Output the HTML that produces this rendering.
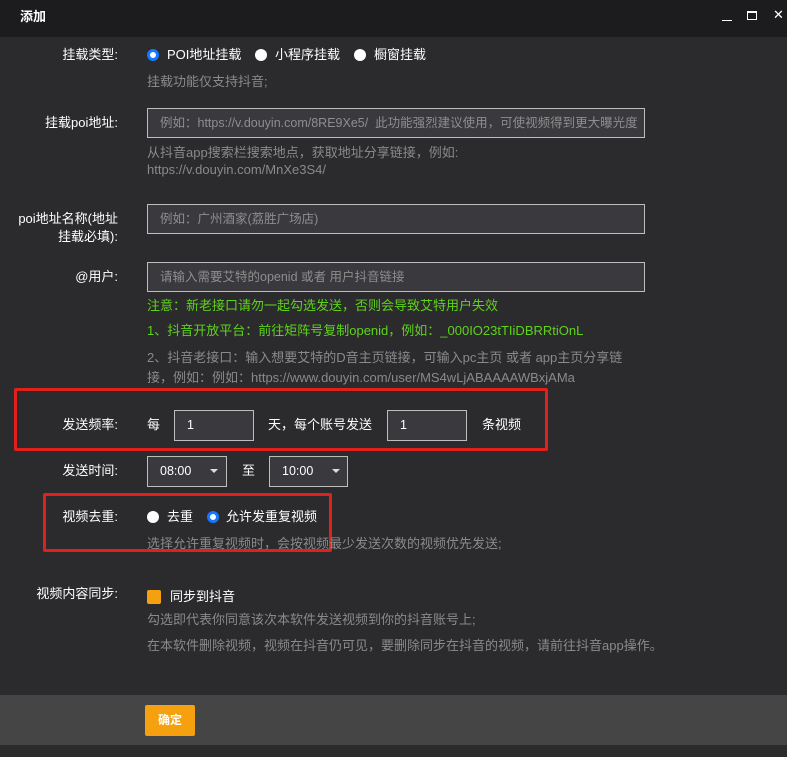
<!DOCTYPE html>
<html><head><meta charset="utf-8"><style>
*{margin:0;padding:0;box-sizing:border-box}
body{width:787px;height:757px;background:#2b2b2e;font-family:"Liberation Sans","Noto Sans CJK SC",sans-serif;font-size:13px;color:#fff;position:relative;overflow:hidden}
.a{position:absolute;white-space:nowrap;line-height:18px}
.lbl{position:absolute;text-align:right;right:669px;line-height:18px;color:#fff}
.hint{color:#8a8a8a}
.inp{position:absolute;background:#3a3a3e;border:1px solid #bdbdbd;color:#8e8e8e;padding-left:12px;line-height:28px;font-size:12.5px;white-space:nowrap;overflow:hidden}
.val{color:#fff}
.rad{position:absolute;width:12px;height:12px;border-radius:50%;background:#fff}
.rad.on{background:#fff;border:3px solid #1677ff}
.red{position:absolute;border:3px solid #e0201b;border-radius:2px}
.green{color:#5fd21a}
.car{position:absolute;width:0;height:0;border-left:4px solid transparent;border-right:4px solid transparent;border-top:4px solid #ddd}
</style></head><body>
<div style="position:absolute;left:0;top:0;width:787px;height:37px;background:#1c1c1e"></div>
<div class="a" style="left:20px;top:8px;font-weight:bold;font-size:13px">添加</div>
<div style="position:absolute;left:722px;top:20px;width:10px;height:1px;background:#fff"></div>
<div style="position:absolute;left:747px;top:11px;width:10px;height:9px;border:1px solid #fff;border-top-width:2px"></div>
<div class="a" style="left:773px;top:6px;font-size:13px">✕</div>

<div class="lbl" style="top:46px">挂载类型:</div>
<div class="rad on" style="left:147px;top:49px"></div>
<div class="a" style="left:167px;top:46px">POI地址挂载</div>
<div class="rad" style="left:255px;top:49px"></div>
<div class="a" style="left:275px;top:46px">小程序挂载</div>
<div class="rad" style="left:354px;top:49px"></div>
<div class="a" style="left:374px;top:46px">橱窗挂载</div>
<div class="a hint" style="left:147px;top:73px">挂载功能仅支持抖音;</div>

<div class="lbl" style="top:114px">挂载poi地址:</div>
<div class="inp" style="left:147px;top:108px;width:498px;height:30px">例如：https://v.douyin.com/8RE9Xe5/&nbsp; 此功能强烈建议使用，可使视频得到更大曝光度</div>
<div class="a hint" style="left:147px;top:144px">从抖音app搜索栏搜索地点，获取地址分享链接，例如:</div>
<div class="a hint" style="left:147px;top:161px">https://v.douyin.com/MnXe3S4/</div>

<div class="lbl" style="top:210px">poi地址名称(地址</div>
<div class="lbl" style="top:228px">挂载必填):</div>
<div class="inp" style="left:147px;top:204px;width:498px;height:30px">例如：广州酒家(荔胜广场店)</div>

<div class="lbl" style="top:268px">@用户:</div>
<div class="inp" style="left:147px;top:262px;width:498px;height:30px">请输入需要艾特的openid 或者 用户抖音链接</div>
<div class="a green" style="left:147px;top:297px">注意：新老接口请勿一起勾选发送，否则会导致艾特用户失效</div>
<div class="a green" style="left:147px;top:322px">1、抖音开放平台：前往矩阵号复制openid，例如：_000IO23tTIiDBRRtiOnL</div>
<div class="a hint" style="left:147px;top:349px">2、抖音老接口：输入想要艾特的D音主页链接，可输入pc主页 或者 app主页分享链</div>
<div class="a hint" style="left:147px;top:369px">接，例如：例如：https://www.douyin.com/user/MS4wLjABAAAAWBxjAMa</div>

<div class="red" style="left:14px;top:388px;width:534px;height:63px"></div>
<div class="lbl" style="top:416px">发送频率:</div>
<div class="a" style="left:147px;top:416px">每</div>
<div class="inp val" style="left:174px;top:410px;width:80px;height:31px">1</div>
<div class="a" style="left:268px;top:416px">天，每个账号发送</div>
<div class="inp val" style="left:387px;top:410px;width:80px;height:31px">1</div>
<div class="a" style="left:482px;top:416px">条视频</div>

<div class="lbl" style="top:462px">发送时间:</div>
<div class="inp val" style="left:147px;top:456px;width:80px;height:31px">08:00</div>
<div class="car" style="left:210px;top:469px"></div>
<div class="a" style="left:242px;top:462px">至</div>
<div class="inp val" style="left:269px;top:456px;width:79px;height:31px">10:00</div>
<div class="car" style="left:332px;top:469px"></div>

<div class="red" style="left:43px;top:493px;width:289px;height:59px"></div>
<div class="lbl" style="top:508px">视频去重:</div>
<div class="rad" style="left:147px;top:511px"></div>
<div class="a" style="left:167px;top:508px">去重</div>
<div class="rad on" style="left:207px;top:511px"></div>
<div class="a" style="left:226px;top:508px">允许发重复视频</div>
<div class="a hint" style="left:147px;top:535px">选择允许重复视频时，会按视频最少发送次数的视频优先发送;</div>

<div class="lbl" style="top:585px">视频内容同步:</div>
<div style="position:absolute;left:147px;top:590px;width:14px;height:14px;border-radius:2px;background:#f5a10f"></div>
<div class="a" style="left:170px;top:588px">同步到抖音</div>
<div class="a hint" style="left:147px;top:611px">勾选即代表你同意该次本软件发送视频到你的抖音账号上;</div>
<div class="a hint" style="left:147px;top:637px">在本软件删除视频，视频在抖音仍可见，要删除同步在抖音的视频，请前往抖音app操作。</div>

<div style="position:absolute;left:0;top:695px;width:787px;height:50px;background:#454545"></div>
<div style="position:absolute;left:145px;top:705px;width:50px;height:31px;background:#f5a10f;border-radius:2px;color:#fff;font-size:12px;line-height:31px;text-align:center;font-weight:bold">确定</div>
</body></html>
